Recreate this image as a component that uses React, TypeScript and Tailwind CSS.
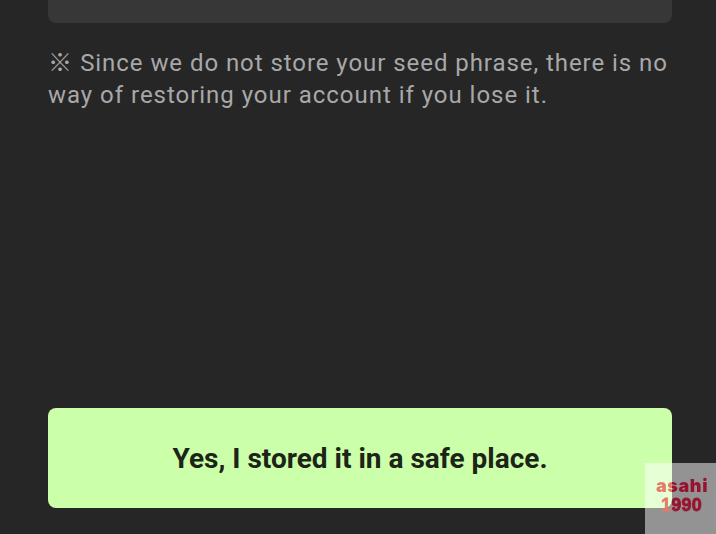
export default function App() {
  return (
    <main className="relative flex h-[534px] w-[716px] flex-col overflow-hidden bg-[#262626] pr-11 pl-12 font-['Roboto','Noto_Sans_CJK_JP',sans-serif]">
      <div className="h-[23px] shrink-0 rounded-b-lg bg-[#373737]" />
      <p className="mt-6 text-[24px] leading-8 tracking-[0.94px] whitespace-nowrap text-[#a8a8a8]">
        <span className="tracking-[1.1px]">※ </span>Since we do not store your seed phrase, there is no
        <br />
        <span className="tracking-[0.97px]">way of restoring your account if you lose it.</span>
      </p>
      <button className="mt-auto mb-[26px] h-[100px] shrink-0 rounded-lg bg-[#ccffaa] pt-0.5 text-[28px] font-bold text-[#1c2417]">
        Yes, I stored it in a safe place.
      </button>
      <div className="absolute right-0 bottom-0 h-[71px] w-[71px] bg-white/50">
        <div className="flex flex-col bg-linear-to-r from-[#e07c68] from-[27px] to-[#981230] to-[27px] bg-clip-text pt-[13px] pl-[11px] text-transparent">
          <span className="h-5 font-['Inter',sans-serif] text-[18px] leading-[19px] font-black tracking-[0.6px]">asahi</span>
          <span className="h-[19px] pl-[5px] font-['Liberation_Sans',sans-serif] text-[18px] leading-[19px] font-bold tracking-[0.2px] [-webkit-text-stroke:0.8px_transparent]">
            1990
          </span>
        </div>
      </div>
    </main>
  );
}
